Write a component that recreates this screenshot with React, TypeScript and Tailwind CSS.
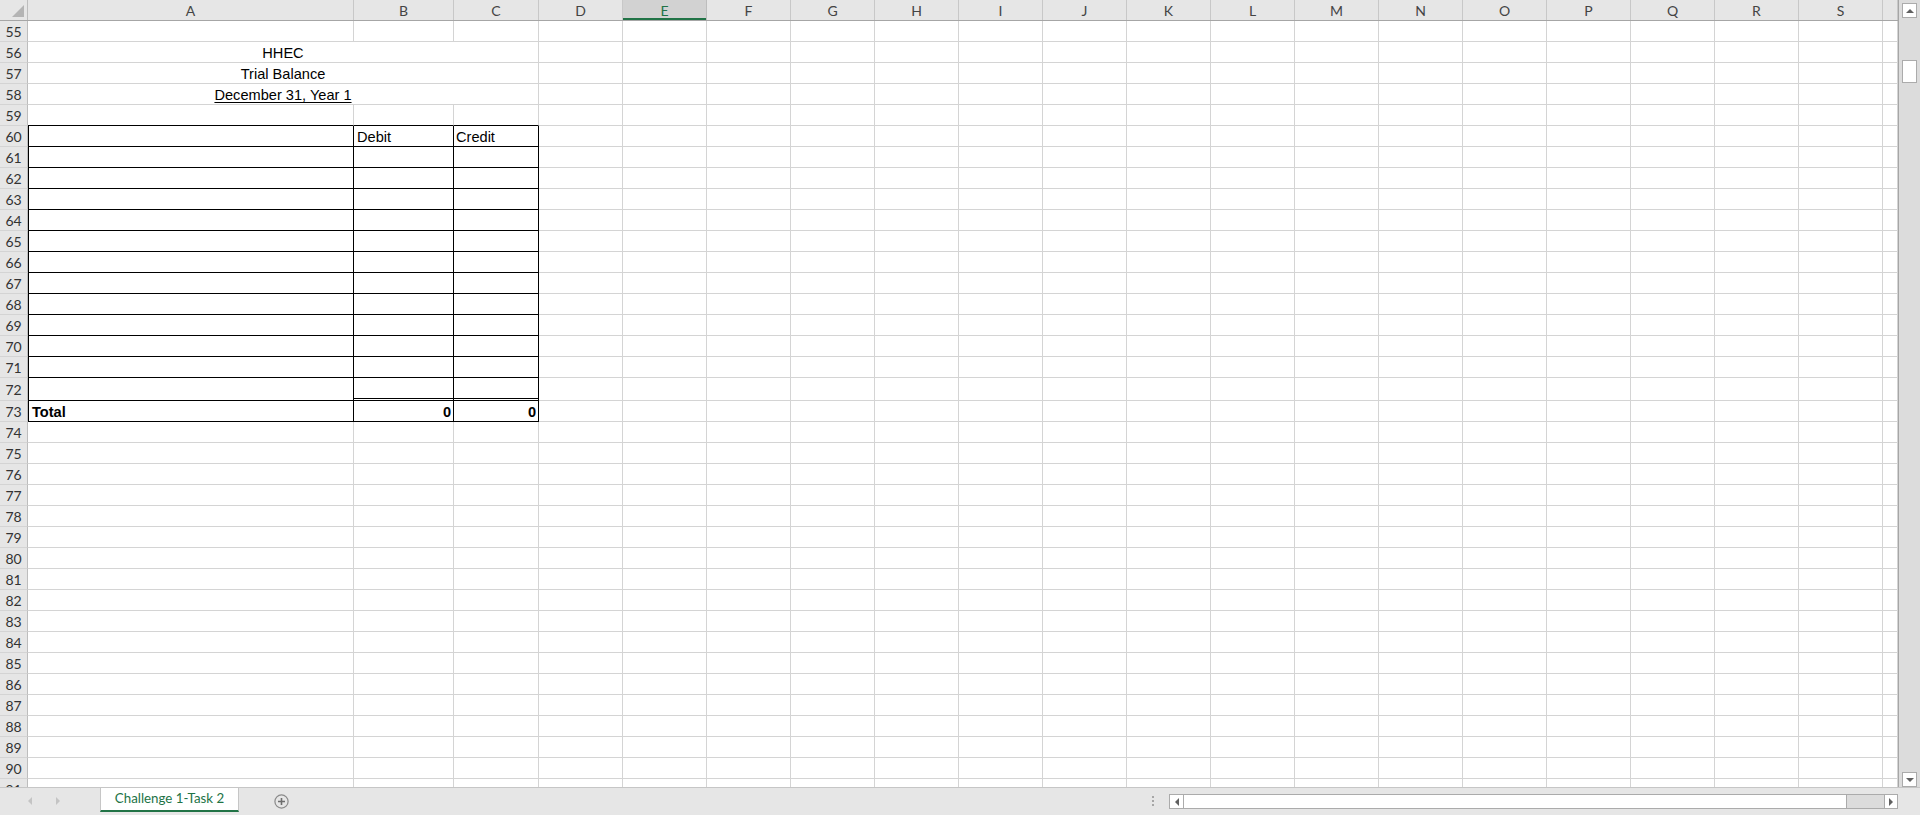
import React from 'react';

type Col = { key: string; label: string; w: string };

const LETTERS = 'DEFGHIJKLMNOPQRS'.split('');

const COLS: Col[] = [
    { key: 'A', label: 'A', w: 'w-[326px]' },
    { key: 'B', label: 'B', w: 'w-[100px]' },
    { key: 'C', label: 'C', w: 'w-[85px]' },
    ...LETTERS.map((l) => ({ key: l, label: l, w: 'w-[84px]' })),
    { key: 'T', label: '', w: 'w-[15px]' },
];

const ROWS = Array.from({ length: 37 }, (_, i) => 55 + i);

const TITLES: Record<number, string> = {
    56: 'HHEC',
    57: 'Trial Balance',
    58: 'December 31, Year 1',
};

// borders for one cell: gridlines by default, black inside the trial balance box
const cellBorders = (row: number, ci: number) => {
    const inTable = ci <= 2 && row >= 60 && row <= 73;
    let cls = inTable ? ' border-r border-r-black' : ' border-r border-r-[#d4d4d4]';
    if ((ci === 1 || ci === 2) && row === 72) {
        cls += ' border-b-[3px] [border-bottom-style:double] border-b-black';
    } else if (inTable || (ci <= 2 && row === 59)) {
        cls += ' border-b border-b-black';
    } else {
        cls += ' border-b border-b-[#d4d4d4]';
    }
    if (inTable && ci === 0) cls += ' shadow-[inset_1px_0_0_#000]';
    return cls;
};

const cellContent = (row: number, ci: number) => {
    if (row === 60 && ci === 1) return <span className="pl-[3px] pt-[2px]">Debit</span>;
    if (row === 60 && ci === 2) return <span className="pl-[2px] pt-[2px]">Credit</span>;
    if (row === 73 && ci === 0) return <span className="pl-[4px] pt-[2px] font-bold">Total</span>;
    if (row === 73 && (ci === 1 || ci === 2)) return <span className="ml-auto pr-[2px] pt-[2px] font-bold">0</span>;
    return null;
};

const Cell: React.FC<{ row: number; ci: number; col: Col }> = ({ row, ci, col }) => (
    <div className={`${col.w} shrink-0 h-full flex items-center overflow-hidden whitespace-nowrap leading-none${cellBorders(row, ci)}`}>
        {cellContent(row, ci)}
    </div>
);

const Tri: React.FC<{ dir: 'up' | 'down' | 'left' | 'right'; color?: string }> = ({ dir, color = '#606060' }) => {
    const pts = {
        up: '0,5 4,1 8,5',
        down: '0,1 4,5 8,1',
        left: '5,0 1,4 5,8',
        right: '1,0 5,4 1,8',
    }[dir];
    const vertical = dir === 'up' || dir === 'down';
    return (
        <svg width={vertical ? 8 : 6} height={vertical ? 6 : 8} viewBox={vertical ? '0 0 8 6' : '0 0 6 8'}>
            <polygon points={pts} fill={color} />
        </svg>
    );
};

export default function App() {
    return (
        <div className="w-[1920px] h-[815px] flex flex-col bg-white overflow-hidden font-['Liberation_Sans',Arial,sans-serif] text-[14.6px] text-black">
            <div className="flex h-[787px] shrink-0">
                {/* sheet */}
                <div className="w-[1899px] shrink-0 flex flex-col border-r border-r-[#a6a6a6] overflow-hidden">
                    {/* column headers */}
                    <div className="flex h-[21px] shrink-0 bg-[#e6e6e6] border-b border-b-[#a6a6a6] font-['Lato',sans-serif] text-[14px] text-[#444]">
                        <div className="w-[28px] shrink-0 h-full border-r border-r-[#bdbdbd] flex items-end justify-end pr-[3px] pb-[3px]">
                            <svg width="12" height="12" viewBox="0 0 12 12">
                                <polygon points="12,0 12,12 0,12" fill="#b4b4b4" />
                            </svg>
                        </div>
                        {COLS.map((c) =>
                            c.key === 'E' ? (
                                <div
                                    key={c.key}
                                    className={`${c.w} shrink-0 h-full flex items-center justify-center bg-[#d2d2d2] text-[#217346] border-r border-r-[#bdbdbd] shadow-[inset_0_-2px_0_#217346]`}
                                >
                                    {c.label}
                                </div>
                            ) : (
                                <div key={c.key} className={`${c.w} shrink-0 h-full flex items-center justify-center border-r border-r-[#c8c8c8]`}>
                                    {c.label}
                                </div>
                            )
                        )}
                    </div>

                    {/* rows */}
                    <div className="flex-1 overflow-hidden">
                        {ROWS.map((r) => (
                            <div key={r} className={`flex shrink-0 ${r === 72 ? 'h-[23px]' : 'h-[21px]'}`}>
                                <div className="w-[28px] shrink-0 h-full flex items-center justify-center bg-[#e6e6e6] border-r border-r-[#bdbdbd] border-b border-b-[#d4d4d4] font-['Lato',sans-serif] text-[14px] text-[#333]">
                                    {r}
                                </div>
                                {TITLES[r] ? (
                                    <>
                                        <div className="w-[511px] shrink-0 h-full flex items-center justify-center border-r border-r-[#d4d4d4] border-b border-b-[#d4d4d4] pt-[2px] leading-none">
                                            <span className={r === 58 ? 'underline underline-offset-2' : ''}>{TITLES[r]}</span>
                                        </div>
                                        {COLS.slice(3).map((c, i) => (
                                            <Cell key={c.key} row={r} ci={i + 3} col={c} />
                                        ))}
                                    </>
                                ) : (
                                    COLS.map((c, i) => <Cell key={c.key} row={r} ci={i} col={c} />)
                                )}
                            </div>
                        ))}
                    </div>
                </div>

                {/* vertical scrollbar */}
                <div className="w-[21px] shrink-0 bg-[#dcdcdc] flex flex-col items-center pt-[3px]">
                    <div className="w-[15px] h-[15px] bg-white border border-[#ababab] flex items-center justify-center">
                        <Tri dir="up" />
                    </div>
                    <div className="w-[15px] h-[23px] mt-[42px] bg-white border border-[#ababab]" />
                    <div className="w-[15px] h-[15px] mt-auto bg-white border border-[#ababab] flex items-center justify-center">
                        <Tri dir="down" />
                    </div>
                </div>
            </div>

            {/* sheet tabs + horizontal scrollbar */}
            <div className="flex-1 flex items-start bg-[#e6e6e6] border-t border-t-[#c6c6c6] font-['Lato',sans-serif]">
                <div className="w-[100px] shrink-0 h-[26px] flex items-center">
                    <div className="ml-[27px]">
                        <Tri dir="left" color="#c4c4c4" />
                    </div>
                    <div className="ml-[22px]">
                        <Tri dir="right" color="#c4c4c4" />
                    </div>
                </div>
                <div className="w-[139px] shrink-0 h-[24px] bg-white border-l border-r border-[#c6c6c6] border-b-2 border-b-[#217346] flex items-center justify-center text-[13.3px] text-[#217346]">
                    Challenge 1-Task 2
                </div>
                <div className="ml-[35px] mt-[6px]">
                    <svg width="15" height="15" viewBox="0 0 15 15">
                        <circle cx="7.5" cy="7.5" r="6.6" fill="none" stroke="#8a8a8a" strokeWidth="1.2" />
                        <path d="M7.5 4v7M4 7.5h7" stroke="#6e6e6e" strokeWidth="1.6" />
                    </svg>
                </div>
                <div className="ml-auto mt-[8px] flex flex-col gap-[2px]">
                    <div className="w-[2px] h-[2px] bg-[#a6a6a6]" />
                    <div className="w-[2px] h-[2px] bg-[#a6a6a6]" />
                    <div className="w-[2px] h-[2px] bg-[#a6a6a6]" />
                </div>
                <div className="ml-[15px] mr-[22px] mt-[6px] w-[729px] h-[15px] flex border border-[#ababab] bg-white">
                    <div className="w-[14px] shrink-0 border-r border-r-[#ababab] flex items-center justify-center">
                        <Tri dir="left" />
                    </div>
                    <div className="w-[663px] shrink-0 border-r border-r-[#ababab] bg-white" />
                    <div className="flex-1 bg-[#dcdcdc]" />
                    <div className="w-[13px] shrink-0 border-l border-l-[#ababab] flex items-center justify-center">
                        <Tri dir="right" />
                    </div>
                </div>
            </div>
        </div>
    );
}
